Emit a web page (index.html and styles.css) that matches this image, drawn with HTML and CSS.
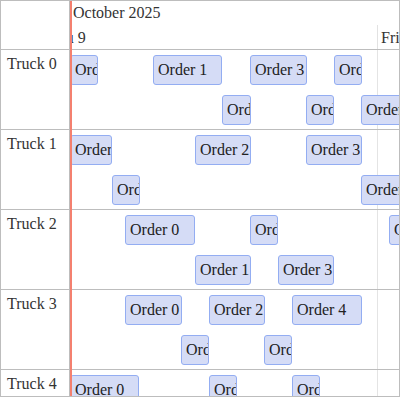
FILE: index.html
```html
<!DOCTYPE html>
<html>
<head>
<meta charset="utf-8">
<link rel="stylesheet" href="styles.css">
</head>
<body>
<div class="scheduler">
  <div class="header">
    <div class="corner"></div>
    <div class="time-header">
      <div class="month">October 2025</div>
      <div class="days">
        <div class="day">Thu 9</div>
        <div class="day">Fri 10</div>
      </div>
    </div>
  </div>

  <div class="row">
    <div class="label">Truck 0</div>
    <div class="lanes">
      <div class="event lane-1" style="left:0px;width:28px">Order 0</div>
      <div class="event lane-1" style="left:83px;width:69px">Order 1</div>
      <div class="event lane-1" style="left:180px;width:57px">Order 3</div>
      <div class="event lane-1" style="left:264px;width:28px">Order 5</div>
      <div class="event lane-2" style="left:152px;width:29px">Order 2</div>
      <div class="event lane-2" style="left:236px;width:28px">Order 4</div>
      <div class="event lane-2" style="left:291px;width:70px">Order 6</div>
    </div>
  </div>

  <div class="row">
    <div class="label">Truck 1</div>
    <div class="lanes">
      <div class="event lane-1" style="left:0px;width:42px">Order 0</div>
      <div class="event lane-1" style="left:125px;width:56px">Order 2</div>
      <div class="event lane-1" style="left:236px;width:56px">Order 3</div>
      <div class="event lane-2" style="left:42px;width:28px">Order 1</div>
      <div class="event lane-2" style="left:291px;width:70px">Order 4</div>
    </div>
  </div>

  <div class="row">
    <div class="label">Truck 2</div>
    <div class="lanes">
      <div class="event lane-1" style="left:55px;width:70px">Order 0</div>
      <div class="event lane-1" style="left:180px;width:28px">Order 2</div>
      <div class="event lane-1" style="left:319px;width:56px">Order 4</div>
      <div class="event lane-2" style="left:125px;width:56px">Order 1</div>
      <div class="event lane-2" style="left:208px;width:56px">Order 3</div>
    </div>
  </div>

  <div class="row">
    <div class="label">Truck 3</div>
    <div class="lanes">
      <div class="event lane-1" style="left:55px;width:57px">Order 0</div>
      <div class="event lane-1" style="left:139px;width:56px">Order 2</div>
      <div class="event lane-1" style="left:222px;width:70px">Order 4</div>
      <div class="event lane-2" style="left:111px;width:28px">Order 1</div>
      <div class="event lane-2" style="left:194px;width:28px">Order 3</div>
    </div>
  </div>

  <div class="row">
    <div class="label">Truck 4</div>
    <div class="lanes">
      <div class="event lane-1" style="left:0px;width:69px">Order 0</div>
      <div class="event lane-1" style="left:139px;width:28px">Order 1</div>
      <div class="event lane-1" style="left:222px;width:28px">Order 2</div>
    </div>
  </div>

  <div class="now-line"></div>
</div>
</body>
</html>
```

FILE: styles.css
```css
html, body {
  margin: 0;
  background: #fff;
}

body {
  font-family: "Liberation Serif", "Times New Roman", serif;
  font-size: 16px;
  color: #333;
}

.scheduler {
  position: relative;
  width: 400px;
  height: 397px;
  box-sizing: border-box;
  border: 1px solid #bdbdbd;
  overflow: hidden;
  box-shadow: 0 1px 3px rgba(0, 0, 0, 0.08);
}

.header {
  display: flex;
  height: 49px;
  box-sizing: border-box;
  border-bottom: 1px solid #bdbdbd;
}

.corner {
  flex: none;
  width: 69px;
  box-sizing: border-box;
  border-right: 1px solid #bdbdbd;
}

.time-header {
  flex: 1;
  min-width: 0;
  overflow: hidden;
}

.month {
  height: 24px;
  line-height: 24px;
  padding-left: 3px;
  white-space: nowrap;
}

.days {
  display: flex;
  height: 24px;
  margin-left: -26px;
}

.day {
  flex: none;
  width: 333px;
  box-sizing: border-box;
  border-left: 1px solid #e2e2e2;
  padding-left: 3px;
  line-height: 25px;
  white-space: nowrap;
}

.row {
  display: flex;
  height: 80px;
  box-sizing: border-box;
  border-bottom: 1px solid #bdbdbd;
}

.label {
  flex: none;
  width: 69px;
  box-sizing: border-box;
  border-right: 1px solid #bdbdbd;
  padding: 5px 0 0 6px;
  white-space: nowrap;
}

.lanes {
  flex: 1;
  min-width: 0;
  position: relative;
  overflow: hidden;
  background: linear-gradient(to right, transparent 307px, #e4e4e4 307px, #e4e4e4 308px, transparent 308px);
}

.event {
  position: absolute;
  height: 30px;
  box-sizing: border-box;
  border: 1px solid #93adf2;
  border-radius: 3px;
  background: #d5dcf6;
  padding: 0 4px;
  line-height: 27px;
  color: #222;
  white-space: nowrap;
  overflow: hidden;
}

.lane-1 {
  top: 5px;
}

.lane-2 {
  top: 45px;
}

.now-line {
  position: absolute;
  left: 69px;
  top: 0;
  bottom: 0;
  width: 2px;
  background: #f4806f;
}
```
